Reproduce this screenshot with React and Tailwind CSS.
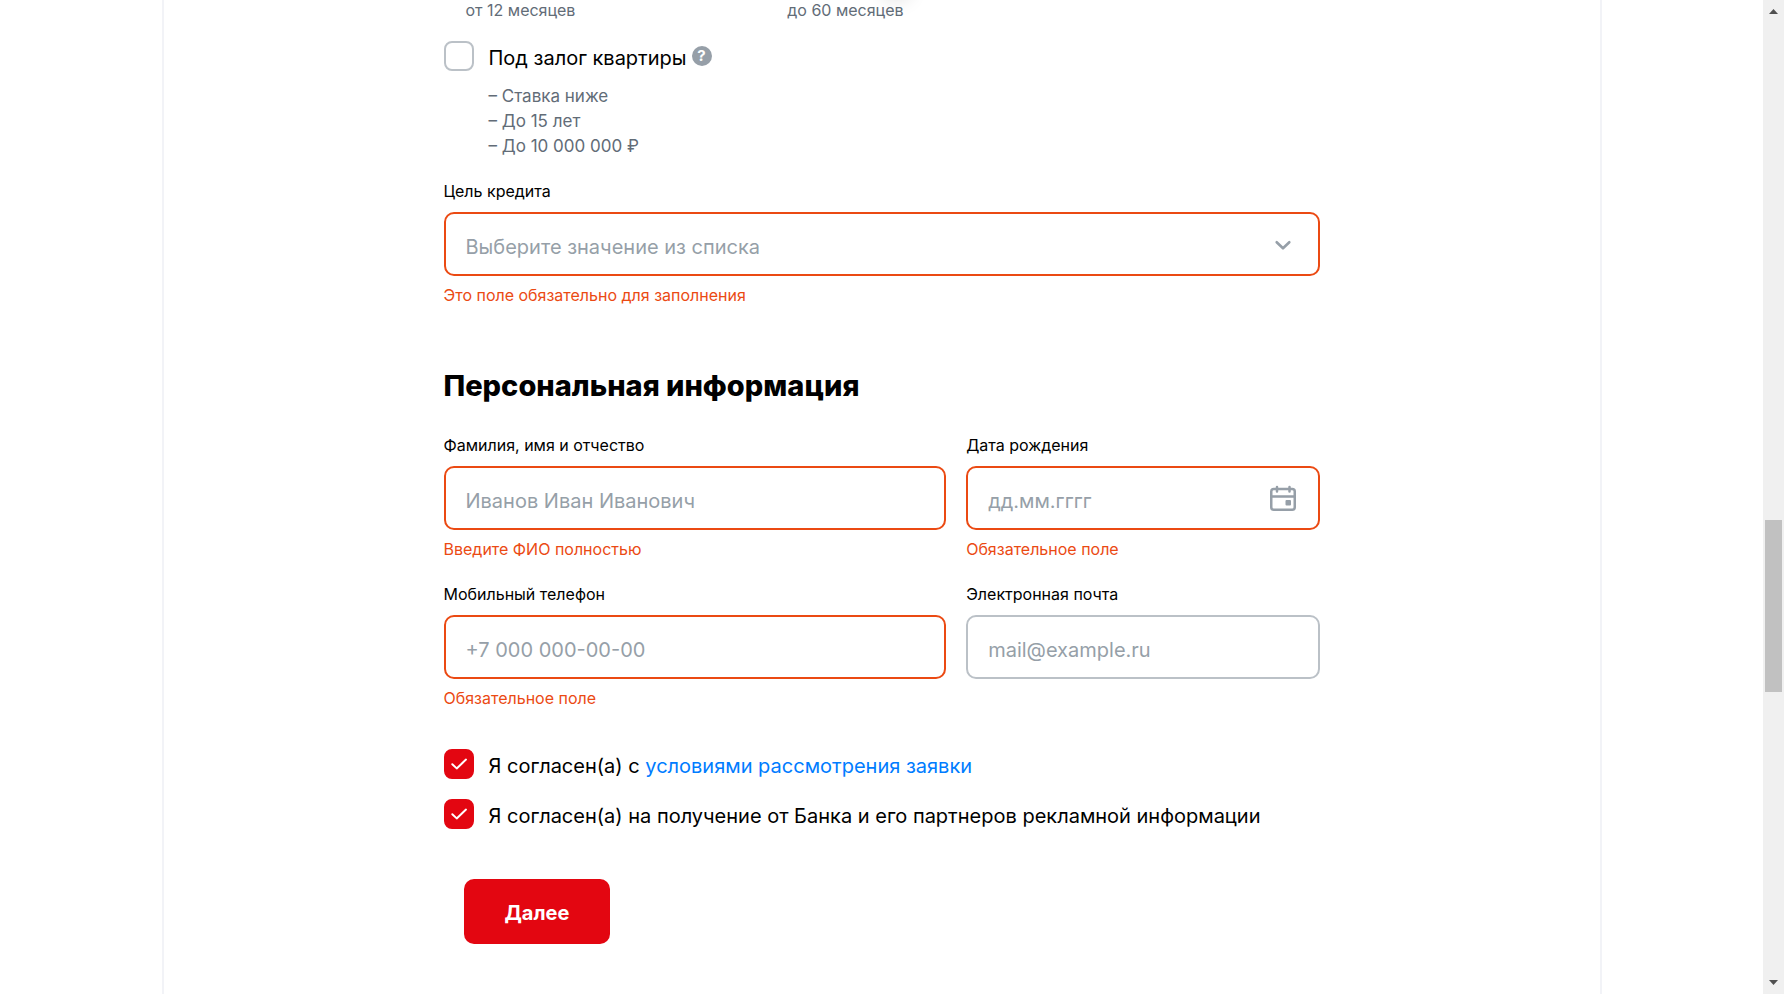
import React, { useId } from 'react';

const boxBase =
  'flex h-16 items-center rounded-[10px] border-2 bg-white';
const control =
  'h-full w-full min-w-0 appearance-none rounded-[10px] bg-transparent px-5 pt-1.5 text-[20px] leading-[30px] outline-none placeholder:text-[#969fa8] placeholder:opacity-100';

function Field({ label, error, className = '', children }) {
  const id = useId();
  return (
    <div className={className}>
      <label htmlFor={id} className="mb-2 block text-[16px] leading-[26px] text-black">
        {label}
      </label>
      <div className={`${boxBase} ${error ? 'border-[#eb4a13]' : 'border-[#bbc1c7]'}`}>
        {children(id)}
      </div>
      {error && (
        <p className="mt-[6px] text-[16px] leading-[26px] text-[#eb4a13]">{error}</p>
      )}
    </div>
  );
}

function CheckRow({ children, checked = false, extra }) {
  const id = useId();
  return (
    <div className="flex items-start">
      <span className="grid size-[30px] shrink-0">
        <input
          id={id}
          type="checkbox"
          defaultChecked={checked}
          className="peer col-start-1 row-start-1 size-[30px] appearance-none rounded-lg border-2 border-[#bbc1c7] bg-white checked:border-[#e30611] checked:bg-[#e30611]"
        />
        <svg
          viewBox="0 0 30 30"
          className="pointer-events-none col-start-1 row-start-1 hidden size-[30px] peer-checked:block"
          fill="none"
          stroke="#fff"
          strokeWidth="2"
          strokeLinecap="round"
          strokeLinejoin="round"
          aria-hidden="true"
        >
          <path d="M8.3 15.2 12.7 19.4 22 10.6" />
        </svg>
      </span>
      <label htmlFor={id} className="ml-[15px] pt-0.5 text-[20px] leading-[30px] text-black">
        {children}
      </label>
      {extra}
    </div>
  );
}

function ScrollBar() {
  return (
    <div className="sticky top-0 flex h-screen w-[21px] shrink-0 flex-col bg-[#f0f0f0]">
      <button type="button" aria-label="Вверх" className="flex h-[21px] w-full shrink-0 items-center justify-center pt-0.5">
        <svg width="9" height="5" viewBox="0 0 9 5" fill="#505050" aria-hidden="true">
          <path d="M4.5 0 9 5H0z" />
        </svg>
      </button>
      <div className="grid flex-1 grid-rows-[499fr_172fr_281fr] px-0.5">
        <div className="row-start-2 bg-[#c1c1c1]" />
      </div>
      <button type="button" aria-label="Вниз" className="flex h-[21px] w-full shrink-0 items-center justify-center pb-0.5">
        <svg width="9" height="5" viewBox="0 0 9 5" fill="#505050" aria-hidden="true">
          <path d="M0 0h9L4.5 5z" />
        </svg>
      </button>
    </div>
  );
}

export default function App() {
  return (
    <div className="flex min-h-screen bg-white font-['Inter','Liberation_Sans',sans-serif]">
      <div className="flex min-w-0 flex-1 justify-center">
        <main className="w-full max-w-[1440px] overflow-hidden border-x-2 border-[#f2f3f7]">
          <form className="mx-auto w-full max-w-[876px]" onSubmit={(e) => e.preventDefault()} noValidate>
            <div className="relative flex max-w-[482px] justify-between px-[22px] text-[16px] leading-5 text-[#626c77]">
              <span>от 12 месяцев</span>
              <span>до 60 месяцев</span>
              <span className="absolute -top-9 right-4 size-7 rounded-full bg-white shadow-[0_8px_20px_rgba(0,0,0,0.14)]" />
            </div>

            <div className="mt-[21px]">
              <CheckRow
                extra={
                  <button type="button" aria-label="Подсказка" className="mt-[5px] ml-[5px] flex size-5 items-center justify-center rounded-full bg-[#969fa8] text-[15px] leading-5 font-bold text-white">
                    ?
                  </button>
                }
              >
                Под залог квартиры
              </CheckRow>
            </div>
            <div className="mt-[11px] pl-[45px] text-[17px] leading-[25px] text-[#626c77]">
              <p>– Ставка ниже</p>
              <p>– До 15 лет</p>
              <p>– До 10 000 000 ₽</p>
            </div>

            <Field label="Цель кредита" error="Это поле обязательно для заполнения" className="mt-[19px]">
              {(id) => (
                <div className="relative h-full w-full">
                  <select id={id} defaultValue="" className={`${control} text-[#969fa8]`}>
                    <option value="">Выберите значение из списка</option>
                  </select>
                  <svg viewBox="0 0 30 30" className="pointer-events-none absolute top-4 right-5 size-[30px]" fill="none" stroke="#969fa8" strokeWidth="2.6" strokeLinecap="round" strokeLinejoin="round" aria-hidden="true">
                    <path d="M8.7 12.2 15 18.3 21.3 12.2" />
                  </svg>
                </div>
              )}
            </Field>

            <h2 className="mt-[60px] text-[29px] leading-9 font-extrabold text-black">Персональная информация</h2>

            <div className="mt-7 grid grid-cols-12 gap-x-5 gap-y-[19px]">
              <Field label="Фамилия, имя и отчество" error="Введите ФИО полностью" className="col-span-7">
                {(id) => <input id={id} type="text" placeholder="Иванов Иван Иванович" className={control} />}
              </Field>
              <Field label="Дата рождения" error="Обязательное поле" className="col-span-5">
                {(id) => (
                  <>
                    <input id={id} type="text" placeholder="дд.мм.гггг" className={control} />
                    <button type="button" aria-label="Открыть календарь" className="mr-5 size-[30px] shrink-0">
                      <svg viewBox="0 0 30 30" className="size-[30px]" fill="none" stroke="#969fa8" strokeWidth="2.5" strokeLinecap="round" strokeLinejoin="round" aria-hidden="true">
                        <rect x="3.25" y="6" width="23.5" height="20.75" rx="2.5" />
                        <path d="M3.5 13.5h23M9 4v4.500M21.5 4v4.500" />
                        <rect x="17.5" y="17" width="5.5" height="5.5" rx="1" fill="#969fa8" stroke="none" />
                      </svg>
                    </button>
                  </>
                )}
              </Field>
              <Field label="Мобильный телефон" error="Обязательное поле" className="col-span-7">
                {(id) => <input id={id} type="tel" placeholder="+7 000 000-00-00" className={control} />}
              </Field>
              <Field label="Электронная почта" className="col-span-5">
                {(id) => <input id={id} type="email" placeholder="mail@example.ru" className={control} />}
              </Field>
            </div>

            <div className="mt-[38px] flex flex-col gap-[18px]">
              <CheckRow checked>
                Я согласен(а) с{' '}
                <a href="#terms" className="text-[#007cff]">
                  условиями рассмотрения заявки
                </a>
              </CheckRow>
              <CheckRow checked>Я согласен(а) на получение от Банка и его партнеров рекламной информации</CheckRow>
            </div>

            <button type="submit" className="mt-12 mb-[50px] ml-5 h-[65px] rounded-[10px] bg-[#e30611] px-[41px] pt-0.5 text-[20px] leading-[30px] font-bold text-white">
              Далее
            </button>
          </form>
        </main>
      </div>
      <ScrollBar />
    </div>
  );
}
